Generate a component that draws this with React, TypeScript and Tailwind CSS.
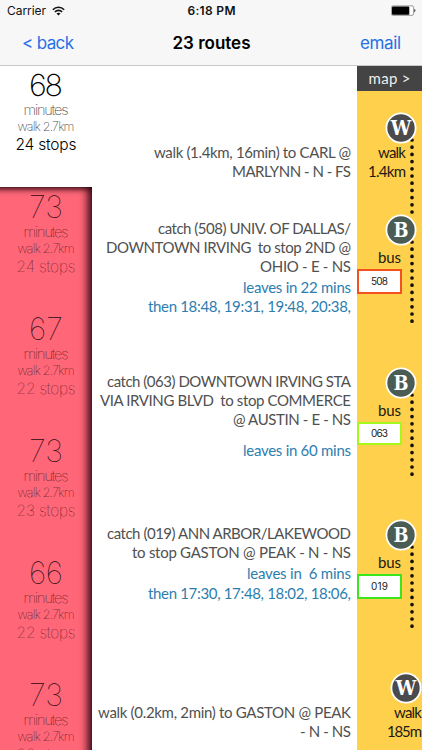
import { useLayoutEffect, useRef } from 'react';

type Route = { minutes: string; walk: string; stops: string };

type TextLine = { text: string; width: number };

type Step = {
  kind: 'W' | 'B';
  lines: TextLine[];
  times?: TextLine[];
  timesGap?: string;
  distance?: TextLine;
  route?: string;
  boxClass?: string;
  height: string;
  trail?: number;
  edge?: boolean;
};

const routes: Route[] = [
  { minutes: '68', walk: 'walk 2.7km', stops: '24 stops' },
  { minutes: '73', walk: 'walk 2.7km', stops: '24 stops' },
  { minutes: '67', walk: 'walk 2.7km', stops: '22 stops' },
  { minutes: '73', walk: 'walk 2.7km', stops: '23 stops' },
  { minutes: '66', walk: 'walk 2.7km', stops: '22 stops' },
  { minutes: '73', walk: 'walk 2.7km', stops: '22 stops' },
];

const steps: Step[] = [
  {
    kind: 'W',
    lines: [
      { text: 'walk (1.4km, 16min) to CARL @', width: 197 },
      { text: 'MARLYNN - N - FS', width: 119 },
    ],
    distance: { text: '1.4km', width: 38 },
    height: 'h-[102px]',
    trail: 90,
  },
  {
    kind: 'B',
    lines: [
      { text: 'catch (508) UNIV. OF DALLAS/', width: 193 },
      { text: 'DOWNTOWN IRVING  to stop 2ND @', width: 245 },
      { text: 'OHIO - E - NS', width: 91 },
    ],
    times: [
      { text: 'leaves in 22 mins', width: 108 },
      { text: 'then 18:48, 19:31, 19:48, 20:38,', width: 203 },
    ],
    timesGap: 'mt-[1px]',
    route: '508',
    boxClass: 'mt-[2px] h-[25px] border-[#f4511e]',
    height: 'h-[152.5px]',
    trail: 80,
  },
  {
    kind: 'B',
    lines: [
      { text: 'catch (063) DOWNTOWN IRVING STA', width: 244 },
      { text: 'VIA IRVING BLVD  to stop COMMERCE', width: 251 },
      { text: '@ AUSTIN - E - NS', width: 118 },
    ],
    times: [{ text: 'leaves in 60 mins', width: 108 }],
    timesGap: 'mt-[11.5px]',
    route: '063',
    boxClass: 'mt-[2.5px] h-[23px] border-[#a6f71a]',
    height: 'h-[152.5px]',
    trail: 80,
  },
  {
    kind: 'B',
    lines: [
      { text: 'catch (019) ANN ARBOR/LAKEWOOD', width: 244 },
      { text: 'to stop GASTON @ PEAK - N - NS', width: 219 },
    ],
    times: [
      { text: 'leaves in  6 mins', width: 104 },
      { text: 'then 17:30, 17:48, 18:02, 18:06,', width: 203 },
    ],
    timesGap: 'mt-[2px]',
    route: '019',
    boxClass: 'mt-[2px] h-[25px] border-[#3be61c]',
    height: 'h-[153px]',
    trail: 80,
  },
  {
    kind: 'W',
    lines: [
      { text: 'walk (0.2km, 2min) to GASTON @ PEAK', width: 253 },
      { text: '- N - NS', width: 51 },
    ],
    distance: { text: '185m', width: 35 },
    height: 'h-[152px]',
    edge: true,
  },
];

// Keeps a label at a fixed width by adjusting its letter spacing.
function Fit({ text, width, className = '' }: TextLine & { className?: string }) {
  const ref = useRef<HTMLSpanElement>(null);

  useLayoutEffect(() => {
    const el = ref.current;
    if (!el) return;
    el.style.letterSpacing = '0px';
    el.style.marginRight = '0px';
    const spacing = (width - el.getBoundingClientRect().width) / (text.length - 1);
    el.style.letterSpacing = `${spacing}px`;
    el.style.marginRight = `${-spacing}px`;
  }, [text, width]);

  return (
    <span ref={ref} className={`block w-max whitespace-pre ${className}`}>
      {text}
    </span>
  );
}

function StatusBar() {
  return (
    <div className="grid h-[21px] grid-cols-3 items-center pl-[7px] pr-[6px] text-[12px] leading-[21px] text-[#111]">
      <div className="flex items-center gap-[6px]">
        <Fit text="Carrier" width={39} />
        <svg width="13" height="10" viewBox="0 0 13 10" fill="none" stroke="#111" strokeWidth="1.6">
          <path d="M0.8 3.7C4 0.4 9 0.4 12.2 3.7" />
          <path d="M2.9 5.9C5 3.8 8 3.8 10.1 5.9" />
          <path d="M6.5 9.6L4.5 7.6C5.7 6.5 7.3 6.5 8.5 7.6Z" fill="#111" stroke="none" />
        </svg>
      </div>
      <div className="flex justify-center">
        <Fit text="6:18 PM" width={48} className="font-semibold" />
      </div>
      <div className="flex justify-end">
        <svg width="25" height="11" viewBox="0 0 25 11">
          <rect x="0.4" y="0.9" width="22.2" height="9.4" rx="1.6" fill="#fff" stroke="#555" strokeWidth="0.6" />
          <rect x="1" y="1.4" width="17.3" height="8.4" rx="1" fill="#000" />
          <path d="M23.4 4v3.2c1.3-.4 1.3-2.8 0-3.2z" fill="#111" />
        </svg>
      </div>
    </div>
  );
}

function RouteCell({ route, active }: { route: Route; active: boolean }) {
  return (
    <div className={`flex h-[122px] shrink-0 flex-col items-center pt-[3px] ${active ? 'text-[#555]' : 'text-[#3a0d15]'}`}>
      <Fit
        text={route.minutes}
        width={34}
        className={`text-[30.5px] leading-[32px] ${active ? 'font-extralight text-black' : 'font-thin text-[#2b0a10]'}`}
      />
      <Fit text="minutes" width={45} className={`text-[14.5px] leading-[18px] ${active ? 'font-extralight' : 'font-thin text-black'}`} />
      <Fit text={route.walk} width={57} className={`text-[12.5px] leading-[16px] ${active ? 'font-extralight' : 'font-thin text-black'}`} />
      <Fit
        text={route.stops}
        width={active ? 61 : 59}
        className={`text-[15.5px] leading-[19px] ${active ? 'font-light text-black' : 'font-thin'}`}
      />
    </div>
  );
}

function Badge({ kind }: { kind: 'W' | 'B' }) {
  return (
    <svg width="32" height="32" viewBox="0 0 32 32" className="relative shrink-0">
      <circle cx="16" cy="16" r="14.6" fill={kind === 'W' ? '#4b4a4c' : '#4a5c54'} stroke="#fff" strokeWidth="1.8" />
      <text
        x="16"
        y="23.2"
        textAnchor="middle"
        fill="#fff"
        fontFamily='"DejaVu Serif", serif'
        fontWeight="700"
        fontSize="20"
        textLength={kind === 'W' ? 20.5 : 15}
        lengthAdjust="spacingAndGlyphs"
      >
        {kind}
      </text>
    </svg>
  );
}

function StepRow({ step }: { step: Step }) {
  const isWalk = step.kind === 'W';
  return (
    <div className={`flex shrink-0 ${step.height}`}>
      <div
        className={`flex flex-1 flex-col items-end pr-[6px] text-[15px] leading-[19.2px] text-[#505050] ${isWalk ? 'pt-[30.5px]' : 'pt-[5px]'}`}
      >
        {step.lines.map((line) => (
          <Fit key={line.text} {...line} />
        ))}
        {step.times && (
          <div className={`flex flex-col items-end text-[#2d7eaf] ${step.timesGap}`}>
            {step.times.map((line) => (
              <Fit key={line.text} {...line} />
            ))}
          </div>
        )}
      </div>

      <div
        className={`relative flex w-[65px] flex-col items-end bg-[#ffd04b] text-[15px] leading-[19px] text-[#1c1a12] ${step.edge ? '' : 'pr-[5px]'}`}
      >
        {step.trail && (
          <svg width="4" height="110" className="absolute left-[53px] top-[26px]">
            <line x1="2" y1="2" x2="2" y2={2 + step.trail} stroke="#14120a" strokeWidth="3.7" strokeLinecap="round" strokeDasharray="0 7.2" />
          </svg>
        )}
        <Badge kind={step.kind} />
        {isWalk ? (
          <div className={`-mt-[1.5px] flex flex-col items-end ${step.edge ? '' : 'pr-[11px]'}`}>
            <Fit text="walk" width={28} />
            {step.distance && <Fit {...step.distance} />}
          </div>
        ) : (
          <>
            <div className="pr-[16px] pt-[2px]">
              <Fit text="bus" width={23} />
            </div>
            <div
              className={`flex w-[45px] items-center justify-center self-start border-2 bg-white font-['Inter',sans-serif] text-[10px] text-[#222] ${step.boxClass}`}
            >
              <Fit text={step.route ?? ''} width={17} />
            </div>
          </>
        )}
      </div>
    </div>
  );
}

export default function App() {
  return (
    <div className="flex h-[750px] w-[422px] flex-col overflow-hidden bg-white font-['Inter','Liberation_Sans',sans-serif]">
      <header className="h-[66px] shrink-0 border-b border-[#c9c9cb] bg-[#f7f7f7]">
        <StatusBar />
        <nav className="grid h-[44px] grid-cols-3 items-center pl-[22px] pr-[21px] text-[17px] leading-[44px] text-[#2670e8]">
          <button className="justify-self-start">
            <Fit text="< back" width={52} />
          </button>
          <h1 className="justify-self-center font-semibold text-black">
            <Fit text="23 routes" width={78} />
          </h1>
          <button className="justify-self-end">
            <Fit text="email" width={41} />
          </button>
        </nav>
      </header>

      <main className="flex min-h-0 flex-1">
        <aside className="flex w-[92px] shrink-0 flex-col">
          <RouteCell route={routes[0]} active />
          <div className="-mt-px flex min-h-0 flex-1 flex-col overflow-hidden bg-[#ff6678] pt-px shadow-[inset_-15px_0_8px_-11px_#2a0410,inset_0_14px_6px_-12px_#1a0006]">
            {routes.slice(1).map((route, i) => (
              <RouteCell key={i} route={route} active={false} />
            ))}
          </div>
        </aside>

        <section className="flex min-w-0 flex-1 flex-col overflow-hidden font-['Lato',sans-serif]">
          <div className="flex h-[46px] shrink-0 justify-end">
            <div className="w-[65px] bg-[#ffd04b]">
              <button className="flex h-[25px] w-full justify-center bg-[#444] text-[15px] leading-[24px] text-[#eee]">
                <Fit text="map >" width={42} />
              </button>
            </div>
          </div>
          {steps.map((step, i) => (
            <StepRow key={i} step={step} />
          ))}
        </section>
      </main>
    </div>
  );
}
